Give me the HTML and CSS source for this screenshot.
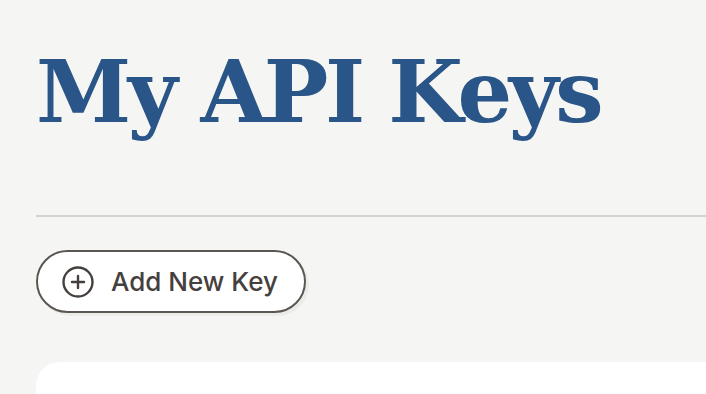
FILE: index.html
```html
<!DOCTYPE html>
<html lang="en">
<head>
  <meta charset="UTF-8">
  <title>My API Keys</title>
  <link rel="stylesheet" href="styles.css">
</head>
<body>

  <div class="page">
    <h1 class="title">My API Keys</h1>
    <hr class="divider">

    <div class="actions">
      <button class="add-btn">
        <svg class="add-icon" viewBox="0 0 32 32" width="32" height="32">
          <circle cx="16" cy="16" r="14.5" fill="none" stroke="currentColor" stroke-width="2.4"/>
          <path d="M16 10v12M10 16h12" stroke="currentColor" stroke-width="2.4" stroke-linecap="round"/>
        </svg>
        Add New Key
      </button>
    </div>

    <div class="keys-card"></div>
  </div>

</body>
</html>
```

FILE: styles.css
```css
* {
  margin: 0;
  padding: 0;
  box-sizing: border-box;
}

body {
  background: #f5f5f3;
  font-family: Inter, "Noto Sans", sans-serif;
  overflow: hidden;
  height: 100vh;
}

.page {
  padding: 37px 0 0 36px;
  width: 760px;
}

.title {
  font-family: "DejaVu Serif", serif;
  font-weight: bold;
  font-size: 86px;
  line-height: 110px;
  color: #2a5588;
  letter-spacing: -3.5px;
}

.divider {
  border: none;
  border-top: 2px solid #d3d3d0;
  margin-top: 68px;
}

.actions {
  margin-top: 33px;
}

.add-btn {
  display: inline-flex;
  align-items: center;
  gap: 17px;
  height: 63px;
  padding: 0 26px 0 24px;
  border: 2px solid #5b5652;
  border-radius: 32px;
  background: #fff;
  color: #45403d;
  font-family: Inter, sans-serif;
  font-size: 26px;
  font-weight: 500;
  box-shadow: 3px 3px 0 #ebebe7;
  cursor: pointer;
}

.add-icon {
  display: block;
}

.keys-card {
  margin-top: 49px;
  height: 200px;
  background: #fff;
  border-radius: 24px;
}
```
